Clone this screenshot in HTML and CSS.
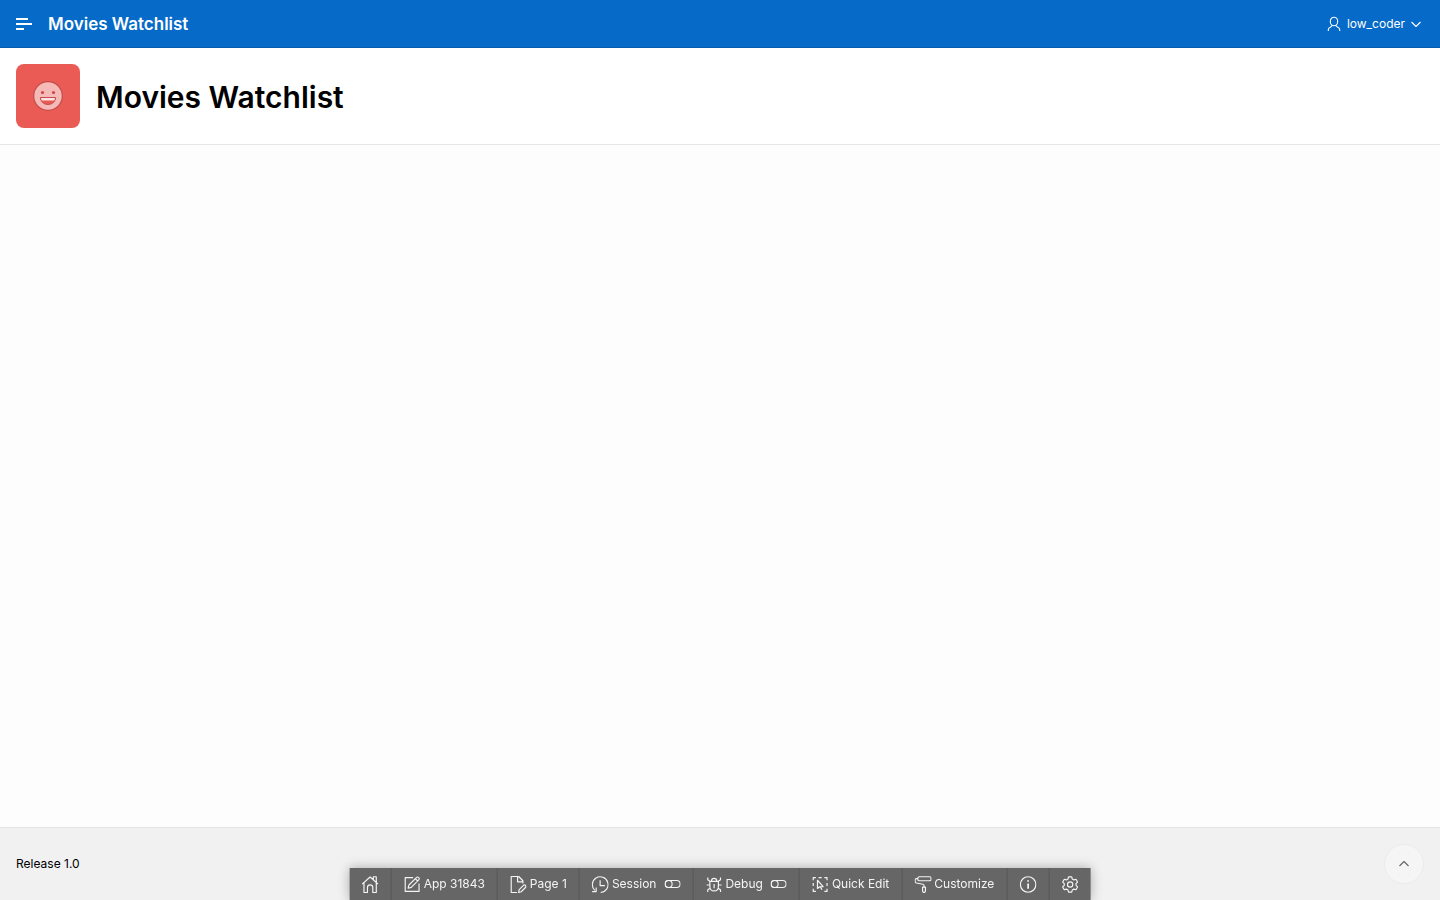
FILE: index.html
```html
<!DOCTYPE html>
<html lang="en">
<head>
<meta charset="utf-8">
<meta name="viewport" content="width=device-width, initial-scale=1">
<title>Movies Watchlist</title>
<link rel="stylesheet" href="styles.css">
</head>
<body class="page">
<header class="header">
  <button class="icon-button" type="button" aria-label="Main navigation">
    <svg class="icon" viewBox="0 0 16 16"><path d="M0 2h12v2H0zM0 7h16v2H0zM0 12h8v2H0z" fill="currentColor"/></svg>
  </button>
  <a class="header-title" href="#">Movies Watchlist</a>
  <button class="user-menu" type="button">
    <svg class="icon line" viewBox="0 0 16 16"><ellipse cx="8" cy="5.500" rx="3.700" ry="4.300"/><path d="M2.300 15v-1.200c0-1.300.7-2 1.900-2.500L6.400 9.400M13.700 15v-1.200c0-1.300-.7-2-1.900-2.500L9.600 9.400"/></svg>
    <span class="user-name">low_coder</span>
    <svg class="icon line" viewBox="0 0 16 16"><path d="M3.500 6 8 10.500 12.500 6"/></svg>
  </button>
</header>
<main class="main">
  <section class="hero">
    <span class="hero-icon">
      <svg class="smiley" viewBox="0 0 32 32"><circle cx="16" cy="16" r="14.300" fill="#f5b9b7" stroke="#c54d48" stroke-width="1.200"/><circle cx="10.500" cy="12.500" r="1.600" fill="#c54d48"/><circle cx="21.500" cy="12.500" r="1.600" fill="#c54d48"/><path d="M8.500 17.500h15c0 4-3.200 7-7.500 7s-7.500-3-7.500-7z" fill="#ea5b55" stroke="#c54d48"/><path d="M9 18h14l-.8 2.500H9.800z" fill="#fbe5e4"/></svg>
    </span>
    <h1 class="hero-title">Movies Watchlist</h1>
  </section>
</main>
<footer class="footer">
  <span>Release 1.0</span>
  <button class="to-top" type="button" aria-label="Back to top">
    <svg class="icon line" viewBox="0 0 16 16"><path d="m3.500 10 4.500-4.500 4.500 4.500"/></svg>
  </button>
</footer>
<nav class="devbar" aria-label="Developer toolbar">
  <button class="tool" type="button" aria-label="Home">
    <svg class="icon tool-icon line" viewBox="0 0 16 16"><path d="M.5 7.700 8 .9l7.500 6.800M2.200 6.400v9.100h3.300v-4.700c0-1.500 1-2.500 2.500-2.500s2.500 1 2.500 2.500v4.700h3.300V6.400M11 3.300V.7h2.800v5"/></svg>
  </button>
  <button class="tool" type="button">
    <svg class="icon tool-icon line" viewBox="0 0 16 16"><path d="M9 1.500H1.500v13h13V7M5 8.500l7-7c.7-.7 1.500-.7 2.200 0s.7 1.500 0 2.200l-7 7-3 .8zM11 2.500l2.200 2.200"/></svg>
    <span>App 31843</span>
  </button>
  <button class="tool" type="button">
    <svg class="icon tool-icon line" viewBox="0 0 16 16"><path d="M7 15.500H1.500V.5h7l4 4v2.500M7.500.5v5h5M8.500 15.500l.5-2.600 4-4c.7-.7 1.300-.6 1.900 0s.7 1.200 0 1.900l-4 4z"/></svg>
    <span>Page 1</span>
  </button>
  <button class="tool" type="button">
    <svg class="icon tool-icon line" viewBox="0 0 16 16"><path d="M3 13.500A7.400 7.400 0 1 1 8.500 15.500M.5 14.700h3.800v-3.900M8 4v5h4.500"/></svg>
    <span>Session</span>
    <svg class="icon toggle line" viewBox="0 0 16 16"><rect x=".5" y="4.500" width="15" height="7" rx="3.500"/><rect x=".5" y="4.500" width="7" height="7" rx="3.500"/></svg>
  </button>
  <button class="tool" type="button">
    <svg class="icon tool-icon line" viewBox="0 0 16 16"><path d="M4 5h8v5c0 2.500-1.500 4-4 4s-4-1.500-4-4zM5.500 5c0-1.800 1-2.700 2.500-2.700s2.500.9 2.500 2.700M8 7.500v4M2 1.500v2L4 5M14 1.500v2L12 5M1 8.500h3M15 8.500h-3M2 15v-2l2.300-1.500M14 15v-2l-2.300-1.500"/></svg>
    <span>Debug</span>
    <svg class="icon toggle line" viewBox="0 0 16 16"><rect x=".5" y="4.500" width="15" height="7" rx="3.500"/><rect x=".5" y="4.500" width="7" height="7" rx="3.500"/></svg>
  </button>
  <button class="tool" type="button">
    <svg class="icon tool-icon line" viewBox="0 0 16 16"><path d="M4 1.500H1.500V4M6.500 1.500h3M12 1.500h2.500V4M1.500 6.500v3M14.500 6.500v3M1.500 12v2.500H4M14.500 12v2.500H12M5.500 4v7.800l2-1.700h3.300zM8 10l1.700 3"/></svg>
    <span>Quick Edit</span>
  </button>
  <button class="tool" type="button">
    <svg class="icon tool-icon line" viewBox="0 0 16 16"><rect x="3" y=".7" width="12.500" height="3.800" rx="1.500"/><path d="M3 2.500H1.700C.9 2.500.5 3 .5 3.700v1.500c0 .7.4 1.200 1.100 1.400l6.200 1.200c.8.200 1.100.6 1.100 1.300v1.200M7.500 10.500h2.700v3.700c0 1.700-2.700 1.700-2.700 0z"/></svg>
    <span>Customize</span>
  </button>
  <button class="tool" type="button" aria-label="Information">
    <svg class="icon tool-icon line" viewBox="0 0 16 16"><circle cx="8" cy="8" r="7.300"/><path d="M8 7v5M8 4v1.500" stroke-width="1.600"/></svg>
  </button>
  <button class="tool" type="button" aria-label="Options">
    <svg class="icon tool-icon line" viewBox="0 0 16 16"><path d="m6.500.8-.5 2-1.500.9-2-.6L1 5.700l1.500 1.500v1.600L1 10.300l1.500 2.600 2-.6 1.500.9.5 2h3l.5-2 1.500-.9 2 .6 1.500-2.600-1.500-1.500V7.200L15 5.700l-1.500-2.600-2 .6-1.500-.9-.5-2z"/><circle cx="8" cy="8" r="2.500"/></svg>
  </button>
</nav>
</body>
</html>
```

FILE: styles.css
```css
* { box-sizing: border-box; }

.page {
  margin: 0;
  min-height: 100vh;
  display: flex;
  flex-direction: column;
  font: 12px/16px Inter, "Liberation Sans", sans-serif;
  color: #000;
  background: #fdfdfd;
}

button {
  margin: 0;
  border: 0;
  padding: 0;
  background: none;
  font: inherit;
  color: inherit;
  cursor: pointer;
}

.icon {
  display: block;
  flex: none;
  width: 16px;
  height: 16px;
}

.line {
  fill: none;
  stroke: currentColor;
  stroke-width: 1.1;
  stroke-linejoin: round;
}

.header {
  display: flex;
  align-items: center;
  gap: 16px;
  height: 48px;
  padding: 0 16px;
  border-bottom: 1px solid #055cb0;
  background: #056ac8;
  color: #fff;
}

.header-title {
  font-size: 17px;
  line-height: 24px;
  font-weight: 600;
  color: inherit;
  text-decoration: none;
}

.user-menu {
  display: flex;
  align-items: center;
  margin-left: auto;
}

.user-name { margin: 0 3px 0 5px; }

.main { flex: 1; }

.hero {
  display: flex;
  align-items: center;
  gap: 16px;
  padding: 16px;
  border-bottom: 1px solid #e6e6e6;
  background: #fff;
}

.hero-icon {
  display: flex;
  align-items: center;
  justify-content: center;
  width: 64px;
  height: 64px;
  border-radius: 8px;
  background: #ea5b55;
}

.smiley {
  width: 32px;
  height: 32px;
}

.hero-title {
  margin: 0;
  padding-top: 2px;
  font-size: 30px;
  line-height: 40px;
  font-weight: 600;
}

.footer {
  display: flex;
  align-items: center;
  justify-content: space-between;
  padding: 16px;
  border-top: 1px solid #e4e4e4;
  background: #f1f1f1;
}

.to-top {
  display: flex;
  align-items: center;
  justify-content: center;
  width: 40px;
  height: 40px;
  border: 1px solid #ebebeb;
  border-radius: 50%;
  background: #f5f5f5;
  color: #666;
}

.devbar {
  position: fixed;
  bottom: 0;
  left: 50%;
  transform: translateX(-50%);
  display: flex;
  height: 32px;
  background: #666;
  color: #f4f4f4;
  box-shadow: 0 0 12px rgba(0, 0, 0, 0.3);
}

.tool {
  display: flex;
  align-items: center;
  gap: 3px;
  padding: 0 12px;
  white-space: nowrap;
}

.tool + .tool { border-left: 1px solid #595959; }

.tool-icon {
  width: 17px;
  height: 17px;
}

.toggle { margin-left: 5px; }
```
